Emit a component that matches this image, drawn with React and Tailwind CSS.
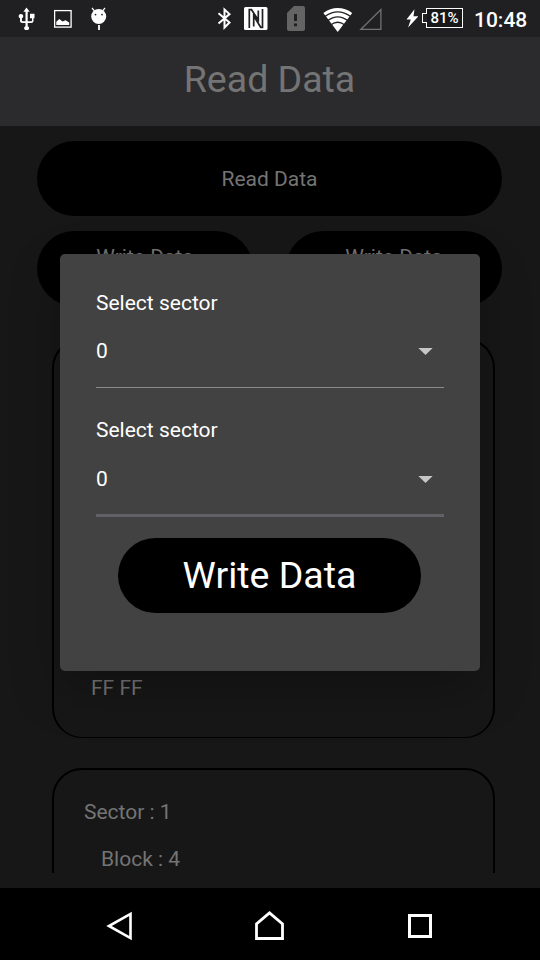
function StatusBar() {
  return (
    <div className="flex h-[37px] shrink-0 items-center bg-[#202022] pb-px text-white">
      {/* USB */}
      <svg className="ml-[18px] shrink-0" width="18" height="24" viewBox="0 0 18 24" fill="#fff">
        <path d="M8.500 1.500l3.200 4.300H9.700v9.400h3.500c.5 0 .8-.3.8-.8v-2.200h-2V7.800h4.500v4.400h-1v2.500c0 1.300-1 2.300-2.300 2.300H9.700v3.200a2.300 2.300 0 1 1-2.200 0V17H4.600c-1.600 0-2.600-1-2.600-2.300v-2.400a2.300 2.300 0 1 1 1.900 0v2.100c0 .5.300.8.800.8h2.800V5.800H5.400z" />
      </svg>
      {/* Picture */}
      <svg className="ml-[18px] shrink-0" width="18" height="24" viewBox="0 0 18 24">
        <rect x="0.600" y="4.600" width="16.500" height="16.500" fill="none" stroke="#fff" strokeWidth="1.300" />
        <path d="M2.300 19v-3.200l3-2.800 3.200 2.600 3-1.400 3.700 2.200V19z" fill="#fff" />
      </svg>
      {/* Android debug */}
      <svg className="ml-[18px] shrink-0" width="18" height="24" viewBox="0 0 18 24">
        <path d="M2 2l3 3.700M15 2l-3 3.700" stroke="#fff" strokeWidth="1.200" />
        <circle cx="8.700" cy="10.500" r="7.500" fill="#fff" />
        <path d="M9 19v5" stroke="#fff" strokeWidth="1.800" />
        <circle cx="5.500" cy="8.600" r="0.900" fill="#202022" />
        <circle cx="12" cy="8.600" r="0.900" fill="#202022" />
      </svg>
      {/* Bluetooth */}
      <svg className="ml-[109px] shrink-0" width="15" height="24" viewBox="0 0 15 24">
        <path d="M1.500 7.300L12.500 16.500 7.500 21.500V3.500l5 4.600L1.500 17.500" fill="none" stroke="#fff" strokeWidth="2" />
      </svg>
      {/* NFC */}
      <svg className="ml-[12px] shrink-0" width="24" height="24" viewBox="0 0 24 24">
        <rect x="0" y="1" width="23.500" height="23" rx="1.500" fill="#fff" />
        <path d="M5.300 22V3.700h2.200L14.300 14V4.500M9.700 20.500V10l7 11.300h1.800V3" fill="none" stroke="#202022" strokeWidth="1.700" />
      </svg>
      {/* SIM warning */}
      <svg className="ml-[18px] shrink-0" width="20" height="26" viewBox="0 0 20 26">
        <path d="M8 1h9a2 2 0 0 1 2 2v21a2 2 0 0 1-2 2H3a2 2 0 0 1-2-2V8z" fill="#646464" />
        <path d="M9.500 9v7M9.500 18.500v2.700" stroke="#202022" strokeWidth="3" />
      </svg>
      {/* Wi-Fi */}
      <svg className="ml-[17px] shrink-0" width="30" height="28" viewBox="0 0 30 28">
        <path d="M.4 9C4.800 5.500 9.700 4 14.700 4S25 5.500 29.200 9L14.700 28z" fill="#fff" />
        <path d="M1.500 12.700C10 6.500 19.500 6.500 28 12.700M4.500 16.800c6.500-5 14-5 20.500 0M8 20.700c4.500-3.300 9-3.300 13.500 0" fill="none" stroke="#202022" strokeWidth="1.300" />
      </svg>
      {/* Cell signal */}
      <svg className="ml-[6px] shrink-0" width="24" height="24" viewBox="0 0 24 24">
        <path d="M1.700 23.500L21.900 3.500v20z" fill="none" stroke="#727273" strokeWidth="1.300" />
      </svg>
      {/* Charging bolt */}
      <svg className="ml-[23px] shrink-0" width="12" height="24" viewBox="0 0 12 24">
        <path d="M8.500 3.300L.5 13.500h4.300L2.100 21.500 12.500 10.300H7.500z" fill="#fff" />
      </svg>
      <div className="ml-[4px] flex items-center">
        <div className="z-10 mr-[-1px] h-[10px] w-[5px] border border-r-0 border-white bg-[#202022]" />
        <div className="flex h-[20px] w-[37px] items-center justify-center border border-white bg-[#181818] pt-px font-['Roboto'] text-[15px] leading-none font-medium">
          81%
        </div>
      </div>
      <div className="mt-[4px] ml-[11px] font-['Roboto'] text-[21px] leading-none font-medium whitespace-nowrap">10:48</div>
    </div>
  );
}

function DropdownArrow() {
  return (
    <svg width="15" height="7" viewBox="0 0 15 7">
      <path d="M.3 0h14.400L7.500 7z" fill="#c6c6c6" />
    </svg>
  );
}

function SelectField({ focused }) {
  return (
    <div className={focused ? "h-[120px]" : "h-[128px]"}>
      <div className={focused ? "h-[25px] leading-[25px]" : "h-[25px] pt-px leading-[25px]"}>Select sector</div>
      <div className="mt-[24px] flex h-[25px] items-center justify-between pr-[11px] leading-[25px]">
        <span>0</span>
        <DropdownArrow />
      </div>
      {focused ? <div className="mt-[22px] h-[3px] bg-[#616167]" /> : <div className="mt-[23px] h-px bg-[#8b8b8b]" />}
    </div>
  );
}

export default function App() {
  return (
    <div className="relative flex h-[960px] w-[540px] flex-col overflow-hidden bg-black font-['Roboto',sans-serif] text-[21px]">
      <StatusBar />
      <header className="flex h-[89px] shrink-0 items-center justify-center bg-[#2b2b2d] pr-px pb-[4px] text-[37.500px] text-[#747474]">
        Read Data
      </header>
      <main className="h-[762px] shrink-0 bg-[#171717] pb-[15px] text-[#747474]">
        <div className="flex h-[747px] flex-col overflow-hidden pt-[15px]">
          <div className="mr-[38px] ml-[37px] flex h-[75px] shrink-0 items-center justify-center rounded-full bg-black pt-[2px]">
            Read Data
          </div>
          <div className="mt-[15px] mr-[38px] ml-[37px] flex shrink-0 justify-between">
            <div className="h-[75px] w-[216px] rounded-full bg-black pt-[14px] text-center leading-[25px]">Write Data</div>
            <div className="h-[75px] w-[216px] rounded-full bg-black pt-[14px] text-center leading-[25px]">Write Data</div>
          </div>
          <div className="mt-[32px] mr-[45px] ml-[52px] flex h-[400px] shrink-0 items-end rounded-[30px] border-2 border-b border-black pb-[36px] pl-[37px] leading-[25px]">
            FF FF
          </div>
          <div className="mt-[30px] mr-[45px] ml-[52px] h-[200px] shrink-0 rounded-[30px] border-2 border-black pt-[30px] pl-[30px] leading-[25px]">
            <div>Sector : 1</div>
            <div className="mt-[22px] ml-[17px]">Block : 4</div>
          </div>
        </div>
      </main>
      <nav className="flex h-[72px] shrink-0 items-center bg-black pt-[4px]">
        <svg className="ml-[105px]" width="30" height="32" viewBox="0 0 30 32">
          <path d="M25.500 3.900v24.200L3.900 16z" fill="none" stroke="#fff" strokeWidth="2.600" />
        </svg>
        <svg className="ml-[118px]" width="34" height="32" viewBox="0 0 34 32">
          <path d="M3.500 28.500V14L16.500 2.900 29.500 14v14.500z" fill="none" stroke="#fff" strokeWidth="2.800" />
        </svg>
        <svg className="ml-[119px]" width="28" height="32" viewBox="0 0 28 32">
          <rect x="3.500" y="5.500" width="21" height="21" fill="none" stroke="#fff" strokeWidth="3" />
        </svg>
      </nav>

      <div className="absolute top-[254px] left-[60px] flex h-[417px] w-[420px] flex-col rounded-[5px] bg-[#424242] px-[36px] pt-[36px] text-white shadow-[0_18px_50px_rgba(0,0,0,0.25)]">
        <SelectField />
        <SelectField focused />
        <div className="ml-[22px] flex h-[75px] w-[303px] items-center justify-center rounded-full bg-black text-[37.500px]">
          Write Data
        </div>
      </div>
    </div>
  );
}
